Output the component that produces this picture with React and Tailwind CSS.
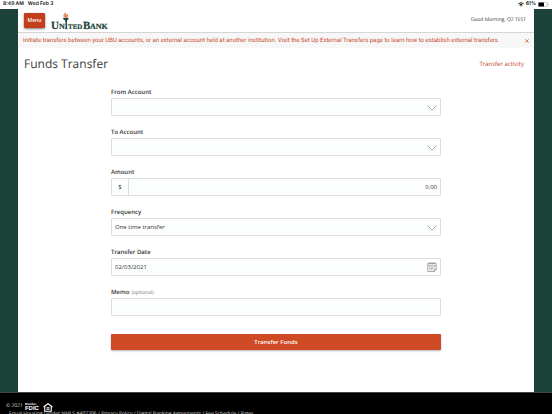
import React, { useState } from "react";

const inputStyle =
  "block w-full h-[18px] px-[3px] text-[6px] text-[#333] bg-[#fcfefd] border border-[#dadede] rounded-[1px] focus:outline-none focus:border-[#1c4139]";

const footerLinks = [
  "Privacy Policy",
  "Digital Banking Agreements",
  "Fee Schedule",
  "Rates",
];

function StatusBar() {
  return (
    <div className="flex shrink-0 items-center justify-between h-[9px] px-[3px] bg-white text-[5px] leading-[9px] font-semibold text-[#111] font-['Inter',sans-serif]">
      <div className="flex gap-1">
        <span>8:49 AM</span>
        <span>Wed Feb 3</span>
      </div>
      <div className="flex items-center gap-[2px]">
        <svg className="w-[6px] h-[5px]" viewBox="0 0 12 10" fill="none" stroke="#111">
          <path d="M1 3.5Q6-1 11 3.5" strokeWidth="2" />
          <path d="M3 6Q6 3.5 9 6" strokeWidth="2" />
          <path d="M4.2 7.2Q6 6 7.8 7.2L6 9.5Z" fill="#111" stroke="none" />
        </svg>
        <span>61%</span>
        <svg className="w-[11px] h-[5px]" viewBox="0 0 22 10">
          <rect x="0.5" y="0.5" width="18" height="9" rx="2" fill="none" stroke="#888" />
          <rect x="1" y="1" width="11" height="8" rx="1" fill="#000" />
          <path d="M20 3.5v3q1.4-.5 1.4-1.5T20 3.5" fill="#888" />
        </svg>
      </div>
    </div>
  );
}

function Logo() {
  return (
    <svg
      className="w-[58px] h-[20px]"
      viewBox="0 0 58 20"
      role="img"
      aria-label="United Bank"
      fill="#1c4139"
      stroke="#1c4139"
      strokeWidth="0.2"
      fontFamily="'Liberation Serif', serif"
      fontWeight="bold"
    >
      <text x="0" y="18" fontSize="11">U</text>
      <text x="8" y="18" fontSize="8">N</text>
      <text x="17" y="18" fontSize="7">TED</text>
      <text x="32" y="18" fontSize="11">B</text>
      <text x="39" y="18" fontSize="8">ANK</text>
      <path
        d="M14.700 1c-.7 1.600-2.600 2-2.300 3.900.1 1 .8 1.700 1.800 1.800h1.400c1.200-.2 1.800-1.200 1.600-2.300-.1-.7-.6-1-.7-1.700-.4.4-.5.8-.5 1.200-.7-.8-1.300-1.600-1.300-2.900z"
        fill="#e88a68"
        stroke="none"
      />
      <path d="M12 7h5.400l-.4 1.800h-.9L15.900 11v6.200l.9.8h-2.800l.6-.8V11l-.8-2.200h-.9z" />
    </svg>
  );
}

function Chevron() {
  return (
    <svg
      className="absolute right-1 top-[7px] w-[10px] h-[6px] pointer-events-none"
      viewBox="0 0 10 6"
      fill="none"
      stroke="#a5a9a8"
    >
      <path d="M.5 .5L5 5L9.500 .5" />
    </svg>
  );
}

function Field({ id, label, hint, children }) {
  return (
    <div>
      <label htmlFor={id} className="block h-3 text-[6px] leading-[12px] font-semibold text-[#333]">
        {label}
        {hint && <span className="ml-[2px] text-[5px] font-normal text-[#777]">{hint}</span>}
      </label>
      <div className="relative">{children}</div>
    </div>
  );
}

function SelectField({ id, label, options }) {
  return (
    <Field id={id} label={label}>
      <select id={id} className={`${inputStyle} appearance-none`}>
        {options.map((opt) => (
          <option key={opt}>{opt}</option>
        ))}
      </select>
      <Chevron />
    </Field>
  );
}

export default function App() {
  const [showNotice, setShowNotice] = useState(true);
  const [amount, setAmount] = useState("0.00");
  const [date, setDate] = useState("02/03/2021");
  const [memo, setMemo] = useState("");

  return (
    <div className="h-screen flex flex-col overflow-hidden bg-[#1c4139] text-[#333] font-['Open_Sans',sans-serif] [text-rendering:geometricPrecision]">
      <StatusBar />

      <div className="flex-1 min-h-0 mx-[18px] bg-white">
        <header className="flex items-center justify-between h-6 pl-[6px] pr-2 border-b border-[#d5d5d5]">
          <div className="flex items-center gap-[6px]">
            <button
              type="button"
              className="w-[21px] h-[15px] rounded-[1px] bg-[#c23e1c] text-white text-[5px] font-semibold shadow-sm shadow-black/40 cursor-pointer"
            >
              Menu
            </button>
            <Logo />
          </div>
          <p className="text-[5px]">Good Morning, Q2 TEST</p>
        </header>

        {showNotice && (
          <div className="flex items-center justify-between h-[15px] px-[5px] bg-[#f7f7f7] text-[#c8482a]">
            <p className="text-[6px] leading-[15px] whitespace-nowrap font-['Roboto',sans-serif]">
              Initiate transfers between your UBU accounts, or an external account held at another
              institution. Visit the Set Up External Transfers page to learn how to establish
              external transfers.
            </p>
            <button
              type="button"
              aria-label="Close"
              className="cursor-pointer"
              onClick={() => setShowNotice(false)}
            >
              <svg className="w-1 h-1" viewBox="0 0 4 4" stroke="currentColor" strokeWidth="0.700">
                <path d="M.3 .3L3.700 3.700M3.700 .3L.3 3.700" />
              </svg>
            </button>
          </div>
        )}

        <main>
          <div className="flex items-center justify-between h-8 pl-[6px] pr-[10px]">
            <h1 className="text-[12px] text-[#3c3c3c]">Funds Transfer</h1>
            <a href="#activity" className="text-[6px] text-[#c8482a]">
              Transfer activity
            </a>
          </div>

          <form
            className="flex flex-col gap-[10px] w-full max-w-[330px] mx-auto mt-[6px]"
            onSubmit={(e) => e.preventDefault()}
          >
            <SelectField id="from" label="From Account" options={[""]} />
            <SelectField id="to" label="To Account" options={[""]} />

            <Field id="amount" label="Amount">
              <div className="flex h-[18px] bg-[#fcfefd] border border-[#dadede] rounded-[1px] text-[6px]">
                <span className="flex items-center justify-center w-[17px] border-r border-[#dadede]">
                  $
                </span>
                <input
                  id="amount"
                  className="flex-1 min-w-0 px-[3px] text-right focus:outline-none"
                  value={amount}
                  onChange={(e) => setAmount(e.target.value)}
                />
              </div>
            </Field>

            <SelectField id="frequency" label="Frequency" options={["One time transfer"]} />

            <Field id="date" label="Transfer Date">
              <input
                id="date"
                className={inputStyle}
                value={date}
                onChange={(e) => setDate(e.target.value)}
              />
              <svg
                className="absolute right-1 top-1 w-[10px] h-[10px] pointer-events-none"
                viewBox="0 0 20 20"
                fill="none"
                stroke="#8c8c8c"
                strokeWidth="1.500"
              >
                <path d="M1.500 3h17v12l-4 4h-13zM1.500 7.500h17M14.500 19v-4h4M5.500 0v5M10 0v5M14.500 0v5" />
                <path d="M4.500 10.500h11M4.500 13h10M4.500 15.500h7" strokeDasharray="2 1" />
              </svg>
            </Field>

            <Field id="memo" label="Memo" hint="(optional)">
              <input
                id="memo"
                className={inputStyle}
                value={memo}
                onChange={(e) => setMemo(e.target.value)}
              />
            </Field>

            <button
              type="submit"
              className="h-4 mt-2 rounded-[1px] bg-[#cd4a24] text-white text-[6px] font-semibold shadow-xs shadow-black/30 cursor-pointer"
            >
              Transfer Funds
            </button>
          </form>
        </main>
      </div>

      <footer className="shrink-0 h-[22px] pt-[10px] px-[6px] overflow-hidden bg-black border-t border-[#444] text-[#ddd] text-[5px]">
        <div className="flex items-center gap-[2px] h-2">
          <span>© 2021</span>
          <div className="flex flex-col text-white font-bold font-['Liberation_Sans',sans-serif]">
            <span className="text-[3px] leading-[3px]">Member</span>
            <span className="text-[6px] leading-[6px]">FDIC</span>
          </div>
          <svg className="w-[10px] h-[9px] ml-[2px]" viewBox="0 0 20 18" fill="none" stroke="#fff" strokeWidth="2.200">
            <path d="M1 8L10 1.500L19 8M3.500 7V16.500h13V7M7 9.500h6M7 12.500h6" />
          </svg>
        </div>
        <p className="ml-[3px] leading-[6px] whitespace-nowrap">
          Equal Housing Lender NMLS #407306
          {footerLinks.map((link) => (
            <React.Fragment key={link}>
              <span>&nbsp;/&nbsp;</span>
              <a href="#footer">{link}</a>
            </React.Fragment>
          ))}
        </p>
      </footer>
    </div>
  );
}
